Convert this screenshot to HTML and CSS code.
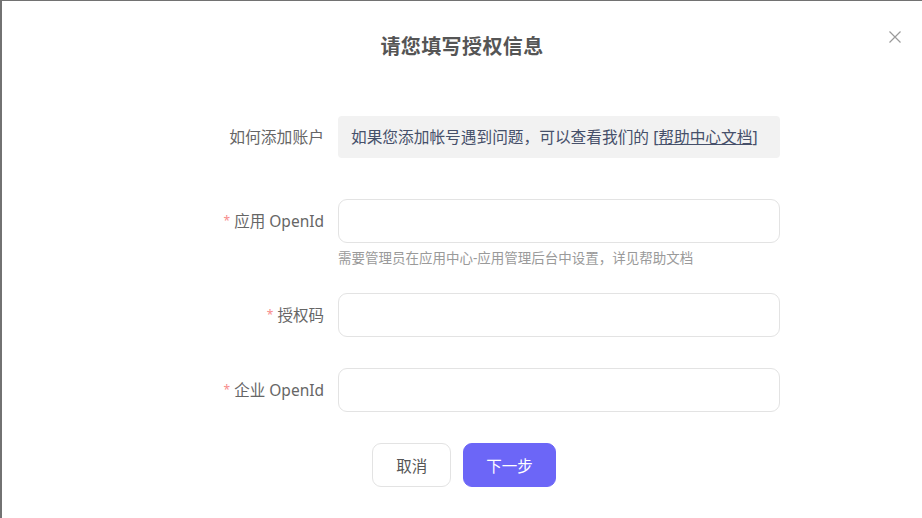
FILE: index.html
```html
<!DOCTYPE html>
<html lang="zh-CN">
<head>
    <meta charset="UTF-8">
    <meta name="viewport" content="width=device-width, initial-scale=1.0">
    <title>请您填写授权信息</title>
    <link rel="stylesheet" href="styles.css">
</head>
<body>
    <div class="dialog">
        <div class="dialog-header">
            <h2 class="dialog-title">请您填写授权信息</h2>
            <button class="dialog-close" aria-label="关闭">
                <svg width="14" height="14" viewBox="0 0 14 14">
                    <path d="M1.5 1.5 L12.5 12.5 M12.5 1.5 L1.5 12.5" stroke="#9a9a9a" stroke-width="1.2" fill="none"/>
                </svg>
            </button>
        </div>

        <form class="auth-form">
            <div class="form-item info-item">
                <label class="form-label">如何添加账户</label>
                <div class="info-box">如果您添加帐号遇到问题，可以查看我们的 [<a href="#">帮助中心文档</a>]</div>
            </div>

            <div class="form-item hint-item">
                <label class="form-label" for="appOpenId"><span class="required">*</span>应用 OpenId</label>
                <div class="form-control">
                    <input type="text" id="appOpenId" class="input">
                    <div class="hint">需要管理员在应用中心-应用管理后台中设置，详见帮助文档</div>
                </div>
            </div>

            <div class="form-item">
                <label class="form-label" for="authCode"><span class="required">*</span>授权码</label>
                <div class="form-control">
                    <input type="text" id="authCode" class="input">
                </div>
            </div>

            <div class="form-item last-item">
                <label class="form-label" for="corpOpenId"><span class="required">*</span>企业 OpenId</label>
                <div class="form-control">
                    <input type="text" id="corpOpenId" class="input">
                </div>
            </div>
        </form>

        <div class="dialog-footer">
            <button type="button" class="btn">取消</button>
            <button type="button" class="btn btn-primary">下一步</button>
        </div>
    </div>
</body>
</html>
```

FILE: styles.css
```css
body {
    margin: 0;
    padding: 0;
    background: #727272;
    font-family: "Noto Sans", "Noto Sans CJK SC", sans-serif;
    overflow: hidden;
}

.dialog {
    position: relative;
    margin: 1px 0 0 2px;
    height: 517px;
    background: #fff;
}

.dialog-header {
    padding-top: 32px;
    text-align: center;
}

.dialog-title {
    margin: 0;
    font-size: 20px;
    line-height: 28px;
    font-weight: bold;
    color: #555;
    letter-spacing: 0.4px;
}

.dialog-close {
    position: absolute;
    top: 29px;
    right: 20px;
    padding: 0;
    border: none;
    background: none;
    cursor: pointer;
    line-height: 0;
}

.auth-form {
    margin: 55px 0 0 200px;
}

.form-item {
    display: grid;
    grid-template-columns: 136px 442px;
    grid-template-rows: 44px;
    align-items: start;
    margin-bottom: 31px;
}

.info-item {
    grid-template-rows: 42px;
    margin-bottom: 41px;
}

.hint-item {
    grid-template-rows: auto;
    margin-bottom: 26px;
}

.last-item {
    margin-bottom: 31px;
}

.form-label {
    height: 44px;
    padding-right: 14px;
    text-align: right;
    font-size: 15.5px;
    line-height: 44px;
    color: #666;
}

.info-item .form-label {
    height: 42px;
    line-height: 42px;
    font-size: 15.8px;
}

.required {
    color: #f78b8b;
    font-size: 12px;
    margin-right: 4px;
    vertical-align: 2px;
    line-height: 1;
}

.info-box {
    height: 42px;
    padding: 0 13px;
    background: #f2f2f2;
    border-radius: 4px;
    font-size: 15.7px;
    line-height: 42px;
    color: #46506a;
    white-space: nowrap;
}

.info-box a {
    color: #46506a;
    text-decoration: underline;
}

.input {
    display: block;
    box-sizing: border-box;
    width: 100%;
    height: 44px;
    padding: 0 14px;
    border: 1px solid #e3e3e3;
    border-radius: 9px;
    font-size: 15px;
    outline: none;
}

.hint {
    margin-top: 6px;
    height: 18px;
    font-size: 13.5px;
    line-height: 18px;
    color: #9a9a9a;
    white-space: nowrap;
}

.dialog-footer {
    display: flex;
    justify-content: center;
    gap: 12px;
    padding-left: 4px;
}

.btn {
    height: 44px;
    padding: 0 23px;
    border: 1px solid #e3e3e3;
    border-radius: 9px;
    background: #fff;
    color: #555;
    font-family: inherit;
    font-size: 15.5px;
    cursor: pointer;
}

.btn-primary {
    padding: 0 22px;
    border-color: #6c66f7;
    background: #6c66f7;
    color: #fff;
}
```
